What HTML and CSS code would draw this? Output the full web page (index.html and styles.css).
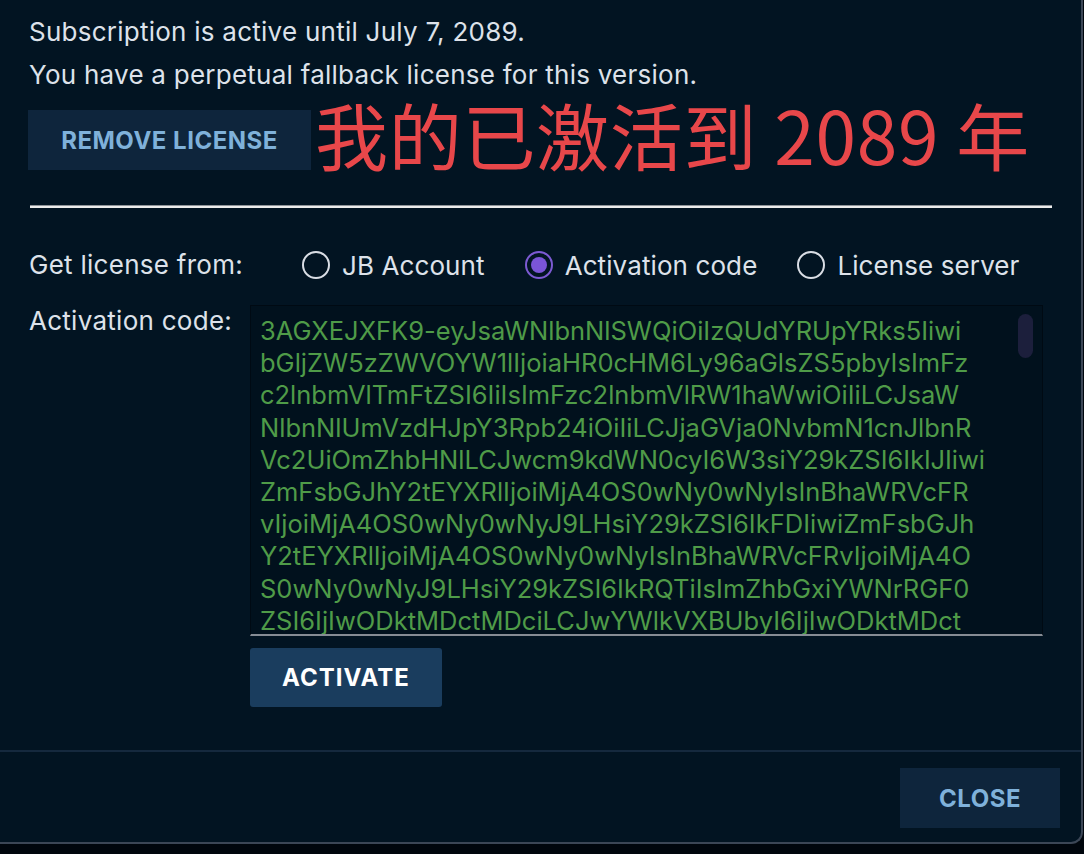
FILE: index.html
```html
<!DOCTYPE html>
<html lang="zh">
<head>
<meta charset="utf-8">
<title>Licenses</title>
<link rel="stylesheet" href="styles.css">
</head>
<body>
<div class="dialog">
  <div class="main">
    <div class="info">
      <p class="info-line">Subscription is active until July 7, 2089.</p>
      <p class="info-line">You have a perpetual fallback license for this version.</p>
    </div>
    <div class="remove-row">
      <button class="btn btn-secondary btn-remove">REMOVE LICENSE</button>
      <span class="note">我的已激活到 2089 年</span>
    </div>
    <div class="rule"></div>
    <div class="source-row">
      <span class="label">Get license from:</span>
      <div class="radios">
        <label class="radio"><span class="radio-circle"></span><span class="radio-text">JB Account</span></label>
        <label class="radio radio-checked"><span class="radio-circle"><span class="radio-dot"></span></span><span class="radio-text">Activation code</span></label>
        <label class="radio"><span class="radio-circle"></span><span class="radio-text">License server</span></label>
      </div>
    </div>
    <div class="code-row">
      <span class="label code-label">Activation code:</span>
      <div class="code-col">
        <div class="code-box">
          <div class="code-text">
            <span class="code-line">3AGXEJXFK9-eyJsaWNlbnNlSWQiOiIzQUdYRUpYRks5Iiwi</span>
            <span class="code-line">bGljZW5zZWVOYW1lIjoiaHR0cHM6Ly96aGlsZS5pbyIsImFz</span>
            <span class="code-line">c2lnbmVlTmFtZSI6IiIsImFzc2lnbmVlRW1haWwiOiIiLCJsaW</span>
            <span class="code-line">NlbnNlUmVzdHJpY3Rpb24iOiIiLCJjaGVja0NvbmN1cnJlbnR</span>
            <span class="code-line">Vc2UiOmZhbHNlLCJwcm9kdWN0cyI6W3siY29kZSI6IklJIiwi</span>
            <span class="code-line">ZmFsbGJhY2tEYXRlIjoiMjA4OS0wNy0wNyIsInBhaWRVcFR</span>
            <span class="code-line">vIjoiMjA4OS0wNy0wNyJ9LHsiY29kZSI6IkFDIiwiZmFsbGJh</span>
            <span class="code-line">Y2tEYXRlIjoiMjA4OS0wNy0wNyIsInBhaWRVcFRvIjoiMjA4O</span>
            <span class="code-line">S0wNy0wNyJ9LHsiY29kZSI6IkRQTiIsImZhbGxiYWNrRGF0</span>
            <span class="code-line">ZSI6IjIwODktMDctMDciLCJwYWlkVXBUbyI6IjIwODktMDct</span>
          </div>
          <span class="scroll-thumb"></span>
        </div>
        <button class="btn btn-primary btn-activate">ACTIVATE</button>
      </div>
    </div>
  </div>
  <div class="footer">
    <button class="btn btn-secondary btn-close">CLOSE</button>
  </div>
</div>
</body>
</html>
```

FILE: styles.css
```css
* { box-sizing: border-box; }

html, body {
  margin: 0;
  padding: 0;
  background: #00060d;
}

body {
  font-family: "Inter", "Noto Sans", "Liberation Sans", sans-serif;
  color: #dde2ea;
  width: 1084px;
  height: 854px;
  overflow: hidden;
}

.dialog {
  width: 1083px;
  height: 844px;
  background: #021422;
  border-right: 2px solid #3b4656;
  border-bottom: 2px solid #3b4656;
  border-bottom-right-radius: 12px;
  display: flex;
  flex-direction: column;
}

.main {
  flex: 1;
  padding: 10px 0 0 0;
}

.info { padding-left: 29px; }

.info-line {
  margin: 0;
  font-size: 26px;
  letter-spacing: 0.25px;
  line-height: 43px;
}

.remove-row {
  display: flex;
  align-items: center;
  margin-top: 14px;
  height: 60px;
}

.btn {
  border: none;
  font-family: "Inter", "Liberation Sans", sans-serif;
  font-weight: 700;
  font-size: 24px;
  letter-spacing: 0.5px;
  cursor: pointer;
  padding: 0;
}

.btn-secondary {
  background: #0e253c;
  color: #7fb1da;
}

.btn-primary {
  background: #1a3d5e;
  color: #ffffff;
  border-radius: 3px;
}

.btn-remove {
  margin-left: 28px;
  width: 283px;
  height: 60px;
}

.note {
  margin-left: 4px;
  margin-top: -14px;
  font-family: "Noto Sans CJK SC", "Noto Sans", sans-serif;
  font-size: 73px;
  letter-spacing: 0.7px;
  line-height: 60px;
  color: #e8474a;
  white-space: nowrap;
}

.rule {
  margin: 35px 0 0 30px;
  width: 1022px;
  height: 3px;
  background: #ececec;
  border-top: 1px solid #8d9298;
}

.source-row {
  display: flex;
  align-items: center;
  margin-top: 41px;
  height: 32px;
  padding-left: 29px;
}

.label {
  font-size: 26px;
  letter-spacing: 0.27px;
  line-height: 32px;
  white-space: nowrap;
}

.radios {
  display: flex;
  align-items: center;
  gap: 40px;
  margin-left: 59px;
}

.radio {
  display: flex;
  align-items: center;
  gap: 12px;
  font-size: 26px;
  letter-spacing: 0.1px;
}

.radio-circle {
  width: 28px;
  height: 28px;
  border-radius: 50%;
  border: 2px solid #d9dde4;
  display: flex;
  align-items: center;
  justify-content: center;
}

.radio-checked .radio-circle { border-color: #7c5ad2; }

.radio-dot {
  width: 16px;
  height: 16px;
  border-radius: 50%;
  background: #7a55d6;
}

.code-row {
  display: flex;
  align-items: flex-start;
  margin-top: 24px;
  padding-left: 29px;
}

.code-label { width: 221px; }

.code-col {
  display: flex;
  flex-direction: column;
  align-items: flex-start;
}

.code-box {
  position: relative;
  width: 793px;
  height: 331px;
  background: #01111d;
  border: 1px solid #000a13;
  border-bottom: 2px solid #868c94;
  padding: 9px 0 0 9px;
  overflow: hidden;
}

.code-text {
  font-size: 25.5px;
  line-height: 32.2px;
  color: #4f9b48;
}

.code-line {
  display: block;
  white-space: nowrap;
}

.scroll-thumb {
  position: absolute;
  left: 767px;
  top: 8px;
  width: 15px;
  height: 44px;
  border-radius: 8px;
  background: #1c1f3c;
}

.btn-activate {
  margin-top: 12px;
  width: 192px;
  height: 59px;
  letter-spacing: 1px;
}

.footer {
  border-top: 2px solid #15293e;
  height: 92px;
  display: flex;
  justify-content: flex-end;
  align-items: flex-start;
  padding: 16px 21px 0 0;
}

.btn-close {
  width: 160px;
  height: 60px;
}
```
